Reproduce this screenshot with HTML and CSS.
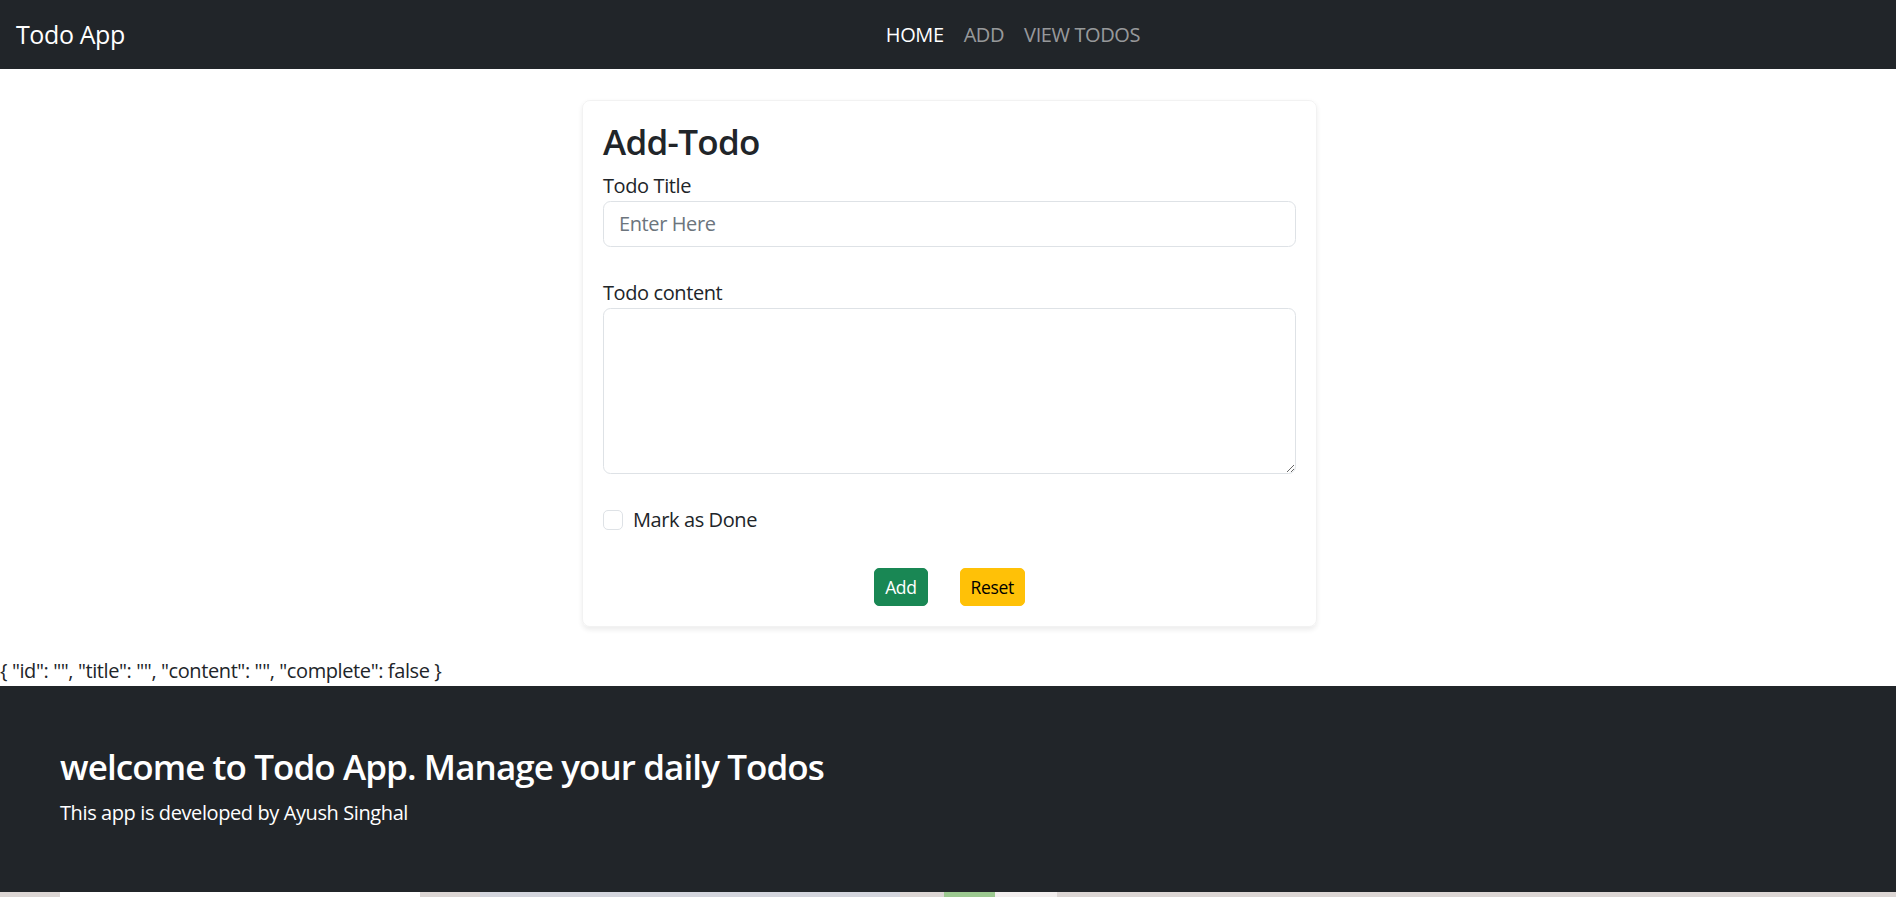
FILE: index.html
```html
<!DOCTYPE html>
<html lang="en">
<head>
<meta charset="utf-8">
<title>Todo App</title>
<link rel="stylesheet" href="styles.css">
</head>
<body>
<nav class="navbar">
  <a class="brand" href="#">Todo App</a>
  <ul class="nav">
    <li><a class="nav-link active" href="#">HOME</a></li>
    <li><a class="nav-link" href="#">ADD</a></li>
    <li><a class="nav-link" href="#">VIEW TODOS</a></li>
  </ul>
</nav>

<main class="main">
  <div class="card">
    <h3 class="card-title">Add-Todo</h3>
    <form class="form">
      <div class="field">
        <label class="label" for="title">Todo Title</label>
        <input class="control" id="title" type="text" placeholder="Enter Here">
      </div>
      <div class="field field-content">
        <label class="label" for="content">Todo content</label>
        <textarea class="control textarea" id="content" rows="5"></textarea>
      </div>
      <div class="check">
        <input class="check-input" type="checkbox" id="done">
        <label class="check-label" for="done">Mark as Done</label>
      </div>
      <div class="actions">
        <button type="button" class="btn btn-success">Add</button>
        <button type="reset" class="btn btn-warning">Reset</button>
      </div>
    </form>
  </div>
</main>

<div class="json">{ "id": "", "title": "", "content": "", "complete": false }</div>

<footer class="footer">
  <h3 class="footer-title">welcome to Todo App. Manage your daily Todos</h3>
  <p class="footer-text">This app is developed by Ayush Singhal</p>
</footer>

<div class="strip">
  <span class="seg seg-a"></span>
  <span class="seg seg-b"></span>
  <span class="seg seg-c"></span>
  <span class="seg seg-d"></span>
  <span class="seg seg-e"></span>
  <span class="seg seg-f"></span>
  <span class="seg seg-g"></span>
</div>
</body>
</html>
```

FILE: styles.css
```css
* { box-sizing: border-box; }

html, body {
  margin: 0;
  padding: 0;
}

body {
  font-family: "Open Sans", "Noto Sans", sans-serif;
  font-size: 20px;
  line-height: 1.5;
  letter-spacing: -0.02em;
  color: #212529;
  background: #fff;
  overflow: hidden;
}

/* Navbar */
.navbar {
  height: 69px;
  background: #212529;
  display: flex;
  align-items: center;
  padding: 0 15px;
}

.brand {
  color: #fff;
  text-decoration: none;
  font-size: 25px;
  line-height: 37.5px;
  margin-right: 20px;
  padding-left: 1px;
}

.nav {
  list-style: none;
  margin: 0 auto;
  padding: 0;
  display: flex;
}

.nav-link {
  display: block;
  padding: 10px 10px;
  line-height: 30px;
  color: rgba(255, 255, 255, 0.55);
  text-decoration: none;
}

.nav-link.active { color: #fff; }

/* Main card */
.main {
  padding-top: 31px;
  padding-left: 3px;
  display: flex;
  justify-content: center;
}

.card {
  width: 735px;
  padding: 20px;
  border: 1px solid rgba(0, 0, 0, 0.05);
  border-radius: 8px;
  box-shadow: 0 2.5px 5px rgba(0, 0, 0, 0.075);
}

.card-title {
  margin: 0 0 8px;
  font-size: 35px;
  font-weight: 600;
  line-height: 1.2;
  letter-spacing: -0.02em;
}

.form { margin: 0; }

.label {
  display: block;
  line-height: 30px;
}

.control {
  display: block;
  width: 100%;
  font: inherit;
  font-size: 20px;
  line-height: 30px;
  letter-spacing: -0.02em;
  padding: 7px 15px;
  color: #212529;
  border: 1px solid #dee2e6;
  border-radius: 7.5px;
  background: #fff;
}

.control::placeholder { color: #6c757d; }

.field-content { margin-top: 31px; }

.textarea {
  height: 166px;
  resize: vertical;
}

.check {
  margin-top: 31px;
  display: flex;
  align-items: flex-start;
  line-height: 30px;
}

.check-input {
  appearance: none;
  -webkit-appearance: none;
  width: 20px;
  height: 20px;
  margin: 5px 10px 0 0;
  border: 1px solid #dee2e6;
  border-radius: 5px;
  background: #fff;
  flex: none;
}

.actions {
  margin-top: 33px;
  display: flex;
  justify-content: center;
  gap: 32px;
}

.btn {
  font: inherit;
  font-size: 17.5px;
  line-height: 26px;
  letter-spacing: -0.02em;
  padding: 5px 10px;
  border: 1px solid transparent;
  border-radius: 5px;
}

.btn-success {
  background: #198754;
  border-color: #198754;
  color: #fff;
}

.btn-warning {
  background: #ffc107;
  border-color: #ffc107;
  color: #000;
}

/* JSON dump */
.json {
  margin-top: 29px;
  line-height: 30px;
}

/* Footer */
.footer {
  background: #212529;
  color: #fff;
  padding: 60px 60px 60px;
  height: 206px;
}

.footer-title {
  margin: 0 0 10px;
  font-size: 35px;
  font-weight: 600;
  line-height: 1.2;
  letter-spacing: -0.026em;
}

.footer-text {
  margin: 0;
  line-height: 30px;
}

/* bottom strip */
.strip {
  display: flex;
  height: 5px;
  background: #dcd6d4;
}

.seg { display: block; height: 100%; }
.seg-a { width: 60px; }
.seg-b { width: 360px; background: #ffffff; }
.seg-c { width: 60px; }
.seg-d { width: 420px; background: #d3d5dd; }
.seg-e { width: 44px; }
.seg-f { width: 51px; background: #9cc990; }
.seg-g { width: 62px; background: #f2eeee; }
```
